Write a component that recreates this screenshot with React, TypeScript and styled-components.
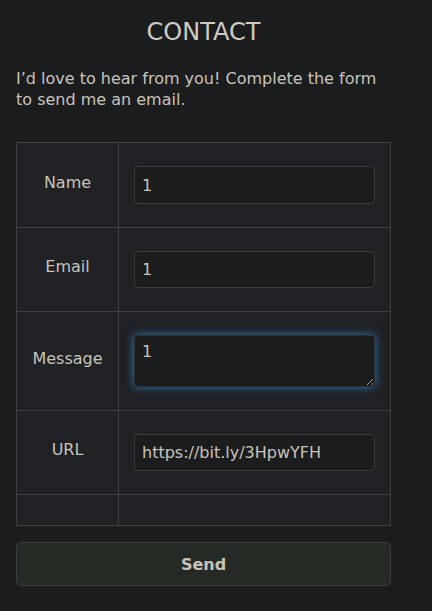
import React from "react";
import styled, { createGlobalStyle } from "styled-components";

const Global = createGlobalStyle`
  html, body { margin: 0; padding: 0; background: #1b1c1e; }
  body { font-family: "DejaVu Sans", sans-serif; color: #c8c3bb; }
`;

const Page = styled.main`
  width: 375px;
  padding: 0 16px;
  box-sizing: content-box;
`;

const Title = styled.h1`
  margin: 18px 0 0;
  font-size: 24px;
  font-weight: 400;
  line-height: 28px;
  text-align: center;
  color: #cfcac2;
`;

const Intro = styled.p`
  margin: 22px 0 32px;
  font-size: 16px;
  line-height: 21px;
  color: #c8c3bb;
`;

const Table = styled.table`
  width: 375px;
  border-collapse: collapse;
  background: #202124;
`;

const Cell = styled.td<{ $label?: boolean; $empty?: boolean }>`
  border: 1px solid #3d4043;
  padding: ${(p) => (p.$empty ? "15px" : p.$label ? "15px 15px 21px" : "15px")};
  text-align: ${(p) => (p.$label ? "center" : "left")};
  vertical-align: middle;
  font-size: 16px;
  color: #c8c3bb;
  width: ${(p) => (p.$label ? "71px" : "auto")};
`;

const Input = styled.input<{ $tall?: boolean }>`
  display: block;
  width: 241px;
  height: ${(p) => (p.$tall ? "38px" : "37px")};
  margin: 8px 0;
  box-sizing: border-box;
  background: #1b1c1e;
  border: 1px solid #3a3d40;
  border-radius: 4px;
  padding: 0 7px;
  font-family: "DejaVu Sans", sans-serif;
  font-size: 16px;
  color: #c8c3bb;
  outline: none;
`;

const Area = styled.textarea`
  display: block;
  width: 241px;
  height: 52px;
  margin: 8px 0;
  box-sizing: border-box;
  background: #1b1c1e;
  border: 1px solid #2c2f32;
  border-radius: 4px;
  padding: 6px 7px;
  font-family: "DejaVu Sans", sans-serif;
  font-size: 16px;
  color: #c8c3bb;
  outline: none;
  resize: vertical;
  box-shadow: 0 0 8px rgba(50, 130, 200, 0.9);
`;

const SendButton = styled.button`
  display: block;
  width: 375px;
  height: 44px;
  margin-top: 16px;
  background: #262a25;
  border: 1px solid #3c3f42;
  border-radius: 5px;
  font-family: "DejaVu Sans", sans-serif;
  font-size: 16px;
  font-weight: 700;
  color: #c8c3bb;
`;

export default function App() {
  return (
    <>
      <Global />
      <Page>
        <Title>CONTACT</Title>
        <Intro>I’d love to hear from you! Complete the form to send me an email.</Intro>
        <Table>
          <tbody>
            <tr>
              <Cell $label>Name</Cell>
              <Cell>
                <Input $tall defaultValue="1" />
              </Cell>
            </tr>
            <tr>
              <Cell $label>Email</Cell>
              <Cell>
                <Input defaultValue="1" />
              </Cell>
            </tr>
            <tr>
              <Cell $label>Message</Cell>
              <Cell>
                <Area defaultValue="1" />
              </Cell>
            </tr>
            <tr>
              <Cell $label>URL</Cell>
              <Cell>
                <Input defaultValue="https://bit.ly/3HpwYFH" />
              </Cell>
            </tr>
            <tr>
              <Cell $label $empty></Cell>
              <Cell $empty></Cell>
            </tr>
          </tbody>
        </Table>
        <SendButton>Send</SendButton>
      </Page>
    </>
  );
}
